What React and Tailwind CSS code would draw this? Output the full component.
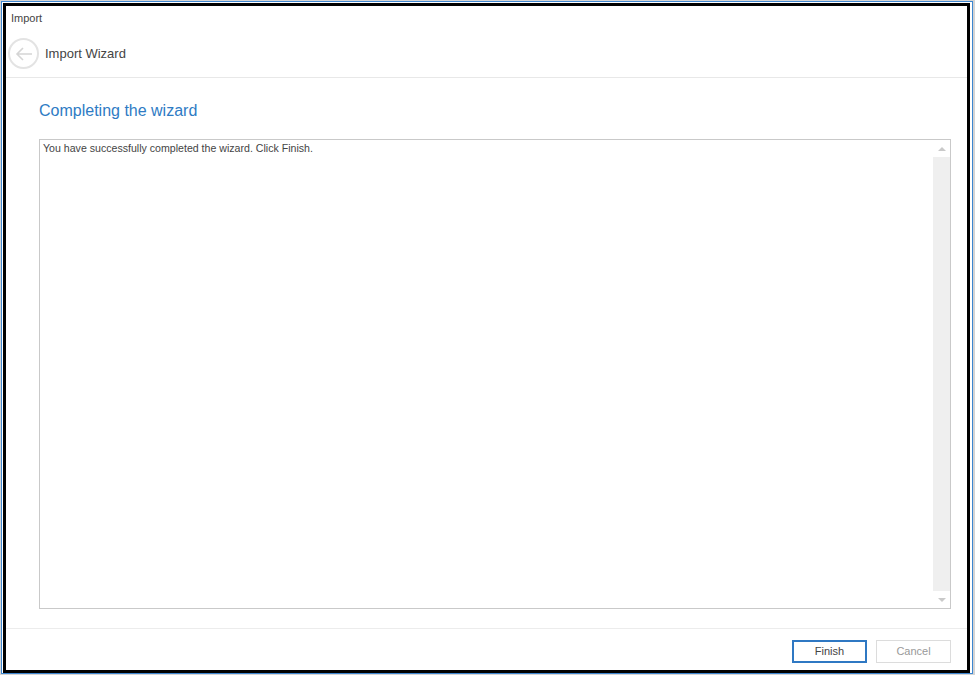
export default function App() {
  return (
    <div className="w-[975px] h-[675px] bg-[#d4d4d4] pt-[1px] pl-[1px] pr-[2px] pb-[1px]" style={{ fontFamily: '"Liberation Sans", Arial, sans-serif' }}>
      <div className="w-full h-full border border-[#3d86d0] bg-white pl-[1px] pt-[1px] pr-[2px]">
        <div className="w-full h-full border-[3px] border-black bg-white flex flex-col">

          {/* Title */}
          <div className="h-[24px] pl-[5px] pt-[5px] text-[11px] leading-[14px] text-[#444]">Import</div>

          {/* Header */}
          <div className="h-[48px] flex items-center pl-[2px] border-b border-[#e8e8e8]">
            <div className="w-[31px] h-[31px] rounded-full border-2 border-[#e3e3e3] flex items-center justify-center">
              <svg width="18" height="14" viewBox="0 0 18 14" fill="none" stroke="#d5d5d5" strokeWidth="1.6">
                <path d="M17 7H2M8 1L2 7l6 6" />
              </svg>
            </div>
            <span className="ml-[6px] text-[13px] text-[#444]">Import Wizard</span>
          </div>

          {/* Body */}
          <div className="flex-1 flex flex-col px-[33px] pr-[16px]">
            <h1 className="mt-[23px] text-[16px] leading-[20px] text-[#2e7bc4]">Completing the wizard</h1>
            <div className="mt-[18px] h-[470px] border border-[#c9c9c9] flex">
              <div className="flex-1 pl-[3px] pt-[1px] text-[10.6px] leading-[14px] text-[#444]">
                You have successfully completed the wizard. Click Finish.
              </div>
              <div className="w-[17px] bg-[#efefef] flex flex-col justify-between">
                <div className="h-[17px] bg-white flex items-center justify-center">
                  <div className="w-0 h-0 border-l-[4px] border-r-[4px] border-b-[4px] border-l-transparent border-r-transparent border-b-[#c9c9c9]" />
                </div>
                <div className="h-[17px] bg-white flex items-center justify-center">
                  <div className="w-0 h-0 border-l-[4px] border-r-[4px] border-t-[4px] border-l-transparent border-r-transparent border-t-[#c9c9c9]" />
                </div>
              </div>
            </div>
          </div>

          {/* Footer */}
          <div className="h-[42px] border-t border-[#ececec] flex items-center justify-end pr-[16px] gap-[9px] pt-[3px]">
            <button className="w-[75px] h-[23px] border-2 border-[#2f78c3] text-[11px] text-[#444] bg-white">Finish</button>
            <button className="w-[75px] h-[23px] border border-[#dcdcdc] text-[11px] text-[#999] bg-white">Cancel</button>
          </div>

        </div>
      </div>
    </div>
  )
}
